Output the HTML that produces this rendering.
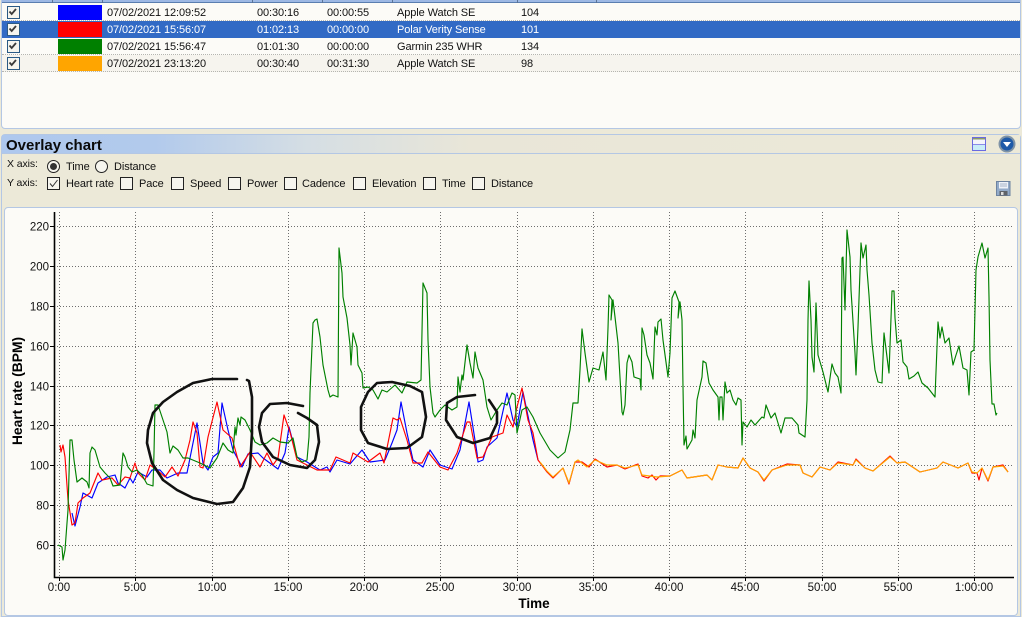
<!DOCTYPE html>
<html><head><meta charset="utf-8"><style>
html,body{margin:0;padding:0}
body{width:1022px;height:617px;overflow:hidden;background:#ECE9D8;position:relative;font:11px "Liberation Sans",sans-serif;color:#111}
div{position:absolute;box-sizing:border-box}
.t{white-space:nowrap;line-height:13px;letter-spacing:-.1px}
.r{left:2px;width:1018px;height:17px;border-bottom:1px dotted #b5b5b0}
.c{left:7px;width:13px;height:13px;border:1.500px solid #2a5a85;background:#f6f5ee}
.s{left:58px;width:44px}
.b{width:13px;height:13px;border:1px solid #222;background:#f6f5ee;top:177px}
.o{width:13px;height:13px;border:1px solid #222;border-radius:50%;background:#f6f5ee;top:160px}
.h{top:0;width:1px;height:3px;background:#5a7396}
.sel{color:#fff}
</style></head><body>
<div style="left:1px;top:-4px;width:1020px;height:133px;background:#FCFBF7;border:1px solid #B4C7E4;border-radius:4px"></div>
<div style="left:2px;top:0;width:1018px;height:3px;background:#9DB8E4;border-bottom:1px solid #5A7EB0"></div>
<div class="h" style="left:52px"></div><div class="h" style="left:102px"></div><div class="h" style="left:252px"></div><div class="h" style="left:322px"></div><div class="h" style="left:392px"></div><div class="h" style="left:517px"></div><div class="h" style="left:596px"></div>
<div class="r" style="top:4px"></div>
<div class="r" style="top:21px;height:17px;background:#316AC5;border:0"></div>
<div class="r" style="top:38px"></div>
<div class="r" style="top:55px;background:#F6F4EE"></div>
<div class="c" style="top:6px"><svg width="10" height="10" style="display:block"><path d="M1.500 4.500l2.200 2.500L8 2" fill="none" stroke="#3a3a3a" stroke-width="1.800"/></svg></div>
<div class="c" style="top:23px"><svg width="10" height="10" style="display:block"><path d="M1.500 4.500l2.200 2.500L8 2" fill="none" stroke="#3a3a3a" stroke-width="1.800"/></svg></div>
<div class="c" style="top:40px"><svg width="10" height="10" style="display:block"><path d="M1.500 4.500l2.200 2.500L8 2" fill="none" stroke="#3a3a3a" stroke-width="1.800"/></svg></div>
<div class="c" style="top:57px"><svg width="10" height="10" style="display:block"><path d="M1.500 4.500l2.200 2.500L8 2" fill="none" stroke="#3a3a3a" stroke-width="1.800"/></svg></div>
<div class="s" style="top:5px;height:15px;background:#0000ff"></div>
<div class="s" style="top:22px;height:15px;background:#ff0000"></div>
<div class="s" style="top:39px;height:15px;background:#008000"></div>
<div class="s" style="top:56px;height:15px;background:#ffa500"></div>

<div class="t" style="left:107px;top:7px">07/02/2021 12:09:52</div><div class="t" style="left:257px;top:7px">00:30:16</div><div class="t" style="left:327px;top:7px">00:00:55</div><div class="t" style="left:397px;top:7px">Apple Watch SE</div><div class="t" style="left:521px;top:7px">104</div>
<div class="t sel" style="left:107px;top:24px">07/02/2021 15:56:07</div><div class="t sel" style="left:257px;top:24px">01:02:13</div><div class="t sel" style="left:327px;top:24px">00:00:00</div><div class="t sel" style="left:397px;top:24px">Polar Verity Sense</div><div class="t sel" style="left:521px;top:24px">101</div>
<div class="t" style="left:107px;top:41px">07/02/2021 15:56:47</div><div class="t" style="left:257px;top:41px">01:01:30</div><div class="t" style="left:327px;top:41px">00:00:00</div><div class="t" style="left:397px;top:41px">Garmin 235 WHR</div><div class="t" style="left:521px;top:41px">134</div>
<div class="t" style="left:107px;top:58px">07/02/2021 23:13:20</div><div class="t" style="left:257px;top:58px">00:30:40</div><div class="t" style="left:327px;top:58px">00:31:30</div><div class="t" style="left:397px;top:58px">Apple Watch SE</div><div class="t" style="left:521px;top:58px">98</div>

<div style="left:1px;top:134px;width:1020px;height:483px;background:#ECE9D8;border:1px solid #B4C7E4;border-radius:4px 4px 0 0"></div>
<div style="left:2px;top:135px;width:1018px;height:19px;background:linear-gradient(90deg,#AEC8EE 0,#B2CAEC 15%,#D5DEE4 30%,#E9E6D8 46%,#ECE9D8 100%);border-bottom:1px solid #B4C7E4"></div>
<div class="t" style="left:6px;top:138px;font-weight:bold;font-size:15px;line-height:16px;color:#0a0a0a;letter-spacing:0">Overlay chart</div>

<svg style="position:absolute;left:972px;top:137px" width="14" height="14"><rect x=".5" y=".5" width="13" height="13" fill="#d8e8fb" stroke="#6a6ae0"/><rect x="1" y="1" width="12" height="1.500" fill="#8a9a68"/><rect x="1" y="2.500" width="12" height="4.500" fill="#f4f4fb"/><rect x="1" y="7" width="12" height="1" fill="#8a8ae8"/><rect x="1" y="8" width="12" height="5" fill="#c8ecf8"/></svg>
<svg style="position:absolute;left:998px;top:135px" width="18" height="18"><circle cx="9" cy="9" r="8.500" fill="#7f93a6"/><circle cx="9" cy="9" r="6.500" fill="#1e5aa8"/><path d="M5 7h8L9 12z" fill="#fff"/></svg>
<svg style="position:absolute;left:996px;top:181px" width="15" height="15"><path d="M.5.500h13.500v14H.5z" fill="#93abc9" stroke="#6d83a0"/><rect x="3" y="1" width="9" height="6.500" fill="#eef2f8"/><path d="M4 3h7M4 5h7" stroke="#8fa0b8" stroke-width=".8"/><rect x="3.500" y="10" width="8" height="4.500" fill="#5e6268"/><rect x="5" y="11" width="2.500" height="3" fill="#ddd"/></svg>

<div class="t" style="left:7px;top:158px;font-size:10.500px">X axis:</div>
<div class="t" style="left:7px;top:177px;font-size:10.500px">Y axis:</div>
<div class="o" style="left:47px"></div><div style="left:50px;top:163px;width:7px;height:7px;border-radius:50%;background:#333"></div>
<div class="o" style="left:95px"></div>
<div class="t" style="left:66px;top:161px">Time</div><div class="t" style="left:114px;top:161px">Distance</div>

<div class="b" style="left:47px"><svg width="11" height="11" style="display:block"><path d="M2 5.500l2.500 3L9.500 2" fill="none" stroke="#333" stroke-width="1"/></svg></div>
<div class="b" style="left:120px"></div><div class="b" style="left:171px"></div><div class="b" style="left:228px"></div><div class="b" style="left:284px"></div><div class="b" style="left:353px"></div><div class="b" style="left:423px"></div><div class="b" style="left:472px"></div>
<div class="t" style="left:66px;top:178px">Heart rate</div><div class="t" style="left:139px;top:178px">Pace</div><div class="t" style="left:190px;top:178px">Speed</div><div class="t" style="left:247px;top:178px">Power</div><div class="t" style="left:302px;top:178px">Cadence</div><div class="t" style="left:372px;top:178px">Elevation</div><div class="t" style="left:442px;top:178px">Time</div><div class="t" style="left:491px;top:178px">Distance</div>

<div style="left:4px;top:207px;width:1014px;height:409px;background:#FCFBF7;border:1px solid #B4C7E4;border-radius:4px"></div>

<svg style="position:absolute;left:0;top:0" width="1022" height="617" font-family="Liberation Sans, sans-serif">
<g stroke="#6e6e6e" stroke-width="1" stroke-dasharray="1 2" fill="none">
<path d="M54 226.500H1014M54 266.500H1014M54 306.500H1014M54 346.500H1014M54 386.500H1014M54 425.500H1014M54 465.500H1014M54 505.500H1014M54 545.500H1014"/>
<path d="M59.500 212V577M135.500 212V577M212.500 212V577M288.500 212V577M364.500 212V577M440.500 212V577M517.500 212V577M593.500 212V577M669.500 212V577M745.500 212V577M822.500 212V577M898.500 212V577M974.500 212V577"/>
</g>
<g stroke="#000" fill="none">
<path d="M54.500 212V577.500H1014" stroke-width="1.600"/>
<path d="M50 226.500h4M50 266.500h4M50 306.500h4M50 346.500h4M50 386.500h4M50 425.500h4M50 465.500h4M50 505.500h4M50 545.500h4M59.500 577v4M135.500 577v4M212.500 577v4M288.500 577v4M364.500 577v4M440.500 577v4M517.500 577v4M593.500 577v4M669.500 577v4M745.500 577v4M822.500 577v4M898.500 577v4M974.500 577v4" stroke-width="1"/>
</g>
<g font-size="11.500" text-anchor="end" fill="#111">
<text x="49" y="230.500">220</text><text x="49" y="270.500">200</text><text x="49" y="310.500">180</text><text x="49" y="350.500">160</text><text x="49" y="390.500">140</text><text x="49" y="429.500">120</text><text x="49" y="469.500">100</text><text x="49" y="509.500">80</text><text x="49" y="549.500">60</text>
</g>
<g font-size="11.500" text-anchor="middle" fill="#111">
<text x="59" y="591">0:00</text><text x="135" y="591">5:00</text><text x="212" y="591">10:00</text><text x="288" y="591">15:00</text><text x="364" y="591">20:00</text><text x="440" y="591">25:00</text><text x="517" y="591">30:00</text><text x="593" y="591">35:00</text><text x="669" y="591">40:00</text><text x="745" y="591">45:00</text><text x="822" y="591">50:00</text><text x="898" y="591">55:00</text><text x="974" y="591">1:00:00</text>
</g>
<text x="534" y="608" font-size="13.500" font-weight="bold" text-anchor="middle" fill="#000">Time</text>
<text transform="translate(22,391) rotate(-90)" font-size="13.800" font-weight="bold" text-anchor="middle" fill="#000">Heart rate (BPM)</text>

<g fill="none" stroke-width="1.150" stroke-linejoin="round">
<polyline stroke="#0000ff" points="72,513 75,526 80,507 83,493 92,498 98,483 107,477 115,475 118,483 125,488 130,478 133,483 138,472 147,477 152,470 160,470 167,478 178,473 187,473 197,423 203,463 208,470 213,457 218,453 222,403 228,430 233,450 242,467 248,454 258,453 263,458 278,469 285,453 289,427 297,457 307,462 320,470 327,467 330,472 337,460 350,464 362,450 370,462 385,460 392,443 397,430 401,402 407,433 413,460 423,467 430,450 440,465 452,469 460,450 469,402 477,453 478,462 483,460 487,447 497,438 507,393 513,420 517,427 523,392 533,440 538,460"/>
<polyline stroke="#ff0000" points="60,445 61,452 63,445 65,457 68,500 72,525 75,523 78,503 83,498 90,493 98,473 102,480 112,478 118,485 125,477 130,478 135,463 138,473 145,480 150,465 157,470 165,477 172,467 178,476 185,460 190,440 193,422 197,433 200,467 203,468 208,437 217,402 223,430 232,438 240,467 250,452 260,467 267,453 273,465 278,458 284,415 290,432 297,460 307,465 317,470 330,470 336,457 350,463 353,453 368,462 380,453 384,463 393,418 397,420 400,418 407,440 413,463 422,463 428,452 440,467 448,470 457,453 467,422 470,422 477,458 483,457 492,437 503,433 507,415 513,427 517,407 522,388 528,420 533,433 538,460 547,472 553,478 563,468 569,484 575,462 582,462 589,467 595,459 607,467 617,465 625,469 638,464 642,476 648,478 652,475 656,480 660,476 670,476 682,470 687,478 707,475 712,480 718,465 727,467 738,468 743,458 750,468 758,472 764,481 772,470 787,464 800,465 803,473 812,477 820,467 830,470 838,462 853,465 856,459 865,468 873,471 890,456 897,463 905,462 920,472 937,468 943,462 958,468 968,463 972,473 977,473 979,480 982,468 988,481 993,467 1003,465 1008,472"/>
<polyline stroke="#008000" points="58,545 62,547 63,560 65,550 67,523 68,510 70,440 72,440 74,460 77,482 82,478 87,482 89,488 90,453 92,447 95,450 100,467 105,473 110,478 113,486 120,485 123,453 125,457 128,467 132,472 137,470 142,475 147,484 153,486 154,453 155,405 158,405 162,417 167,432 170,453 173,446 178,450 183,458 188,458 200,463 210,468 217,458 223,443 228,450 233,453 235,427 236,435 238,418 240,425 241,417 245,420 250,430 255,442 260,445 267,443 273,438 280,442 288,443 293,438 297,457 302,462 307,460 309,437 310,393 313,323 315,320 317,319 320,337 323,365 328,390 330,397 333,395 338,397 339,248 342,273 343,297 347,318 350,345 351,365 353,333 357,347 358,365 362,373 363,388 368,387 373,390 378,399 382,390 387,392 395,385 402,393 407,382 417,383 421,380 423,283 427,293 428,340 430,387 433,413 435,417 440,410 445,405 452,410 457,407 458,377 460,392 462,375 463,380 467,345 470,363 473,378 475,352 478,368 483,380 487,407 491,420 497,410 502,403 507,405 512,393 515,395 517,433 522,410 527,407 533,417 540,433 550,450 558,458 565,452 570,430 573,403 578,403 580,370 582,329 585,353 589,382 593,368 599,370 603,352 606,380 608,328 609,295 612,300 611,320 613,300 615,317 618,343 622,412 623,415 625,405 627,363 629,355 632,362 634,377 640,379 641,390 642,328 644,335 647,355 650,363 653,379 655,327 657,335 658,322 661,319 663,340 668,377 670,353 672,298 675,291 679,302 678,318 680,302 682,320 683,387 684,445 686,436 687,449 692,440 693,430 695,438 697,400 702,377 703,361 706,363 709,383 713,390 718,397 719,420 720,397 722,397 723,420 725,382 727,393 730,390 733,400 736,405 738,398 741,400 742,445 743,422 747,427 751,420 755,425 762,417 764,418 766,405 771,418 775,413 781,433 785,418 792,418 798,425 799,433 805,437 807,400 808,320 809,281 811,320 812,357 814,372 816,303 818,355 823,372 828,392 832,364 835,373 838,377 841,393 842,258 843,257 845,310 847,230 850,257 851,290 855,353 856,375 858,327 861,243 863,258 866,245 867,270 869,295 872,343 875,370 878,382 882,383 884,333 889,373 892,291 894,291 895,318 897,343 901,340 903,362 907,367 909,379 914,376 918,372 922,383 928,388 935,397 938,322 940,338 942,327 945,343 949,338 953,365 956,355 959,346 963,368 967,370 969,395 971,352 974,350 976,270 978,257 982,243 985,258 988,248 989,297 990,360 992,404 994,404 996,415 997,413"/>
<polyline stroke="#ffa500" points="540,462 547,471 553,477 563,468 569,483 575,462 578,460 587,467 595,460 607,465 617,465 625,468 638,465 642,475 657,477 670,476 682,470 687,478 707,475 712,480 718,465 727,467 738,468 743,458 750,468 758,472 764,480 772,470 787,465 800,465 803,473 812,477 820,467 830,470 838,463 853,465 856,460 865,468 873,471 890,457 897,463 905,462 920,472 937,468 943,462 958,468 968,463 972,472 977,473 982,468 988,480 993,467 1003,466 1008,472"/>
</g>
<g fill="none" stroke="#111" stroke-width="2.600" stroke-linecap="round" stroke-linejoin="round">
<path d="M237 379L212 379L193 383L177 392L163 402L153 413L148 430L147 443L152 463L163 480L177 490L193 498L217 504L233 502L243 488L250 467L252 433L252 397L249 381L247 380"/>
<path d="M303 406L287 403L270 404L262 413L259 427L262 442L273 457L290 465L307 468L315 460L319 442L317 425L307 418L298 413"/>
<path d="M377 383L392 382L410 386L422 392L426 417L422 437L407 448L387 449L368 443L361 430L361 407L368 392Z"/>
<path d="M475 395L457 397L447 403L446 420L457 437L473 443L490 438L497 423L497 412L489 400"/>
</g>
</svg>
</body></html>
